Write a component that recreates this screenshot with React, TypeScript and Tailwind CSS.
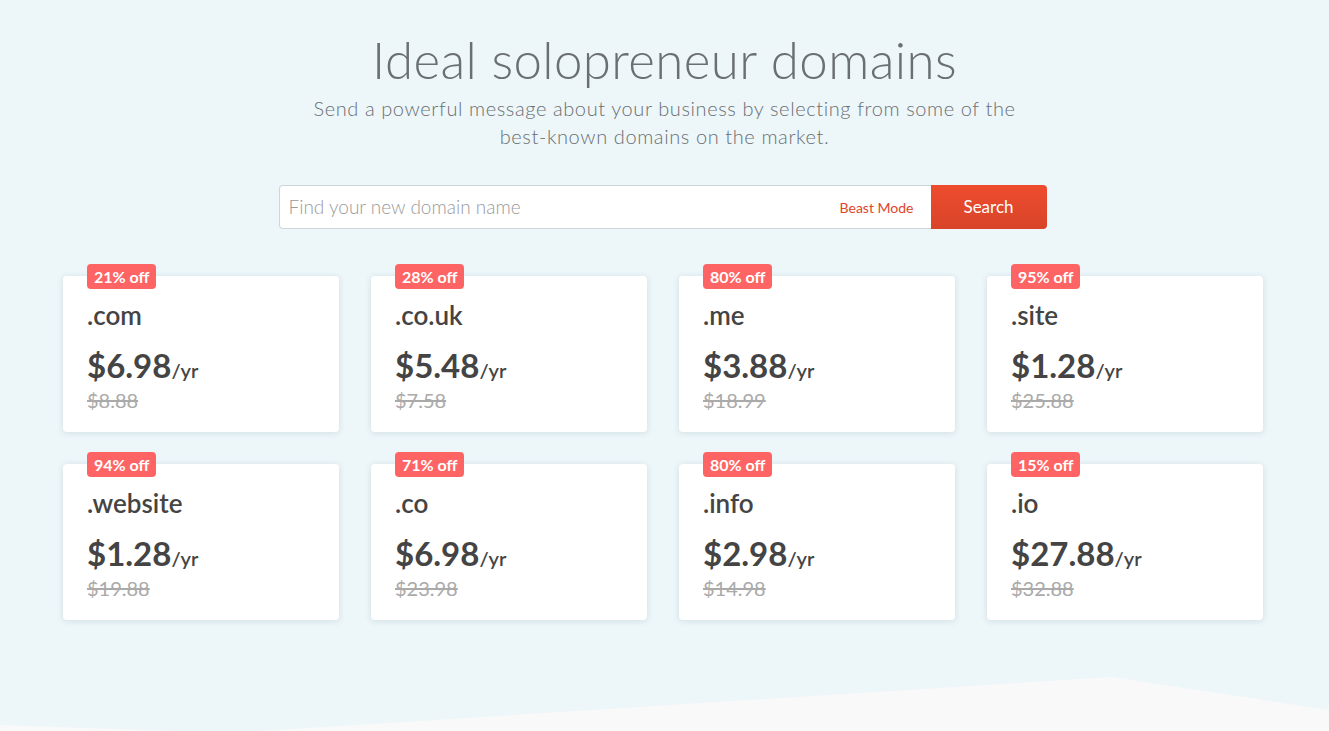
const domains = [
  { tld: ".com", price: "$6.98", old: "$8.88", off: "21% off" },
  { tld: ".co.uk", price: "$5.48", old: "$7.58", off: "28% off" },
  { tld: ".me", price: "$3.88", old: "$18.99", off: "80% off" },
  { tld: ".site", price: "$1.28", old: "$25.88", off: "95% off" },
  { tld: ".website", price: "$1.28", old: "$19.88", off: "94% off" },
  { tld: ".co", price: "$6.98", old: "$23.98", off: "71% off" },
  { tld: ".info", price: "$2.98", old: "$14.98", off: "80% off" },
  { tld: ".io", price: "$27.88", old: "$32.88", off: "15% off" },
];

const DomainCard = ({ tld, price, old, off }: (typeof domains)[number]) => (
  <div className="relative h-[156px] rounded-[4px] bg-white px-6 pt-[23px] shadow-[0_1px_6px_rgba(80,120,140,0.18)]">
    <span className="absolute left-6 top-[-12px] rounded-[4px] bg-[#fe6464] px-[7px] py-[2px] text-[16px] font-bold leading-[21px] text-white">
      {off}
    </span>
    <div className="text-[26px] font-semibold leading-[32px] text-[#444]">{tld}</div>
    <div className="mt-[14px] flex items-baseline text-[#444]">
      <span className="text-[33px] font-bold leading-[40px]">{price}</span>
      <span className="text-[20px] font-semibold">/yr</span>
    </div>
    <div className="mt-[3px] text-[20px] leading-[24px] text-[#aaa] line-through">{old}</div>
  </div>
);

export default function App() {
  return (
    <div className="relative h-[731px] overflow-hidden bg-[#edf6f9] font-['Lato',sans-serif]">
      <div className="flex flex-col items-center pt-[29px]">
        <h1 className="text-[51px] font-light leading-[62px] tracking-[0.4px] text-[#6a6f72]">
          Ideal solopreneur domains
        </h1>
        <p className="mt-[3px] w-[730px] text-center text-[20px] font-light leading-[28px] tracking-[0.6px] text-[#6a6f72]">
          Send a powerful message about your business by selecting from some of the best-known domains on the market.
        </p>
        <div className="ml-[-4px] mt-[35px] flex h-[44px] w-[768px]">
          <div className="flex flex-1 items-center rounded-l-[4px] border border-r-0 border-[#cfd6da] bg-white pl-[9px] pr-[17px]">
            <span className="flex-1 text-[19px] font-light text-[#9a9a9a]">Find your new domain name</span>
            <span className="text-[14px] text-[#e0452a]">Beast Mode</span>
          </div>
          <button className="w-[116px] rounded-r-[4px] bg-gradient-to-b from-[#ee4c2e] to-[#d84429] text-[17px] text-white">
            Search
          </button>
        </div>
      </div>
      <div className="ml-[63px] mt-[47px] grid w-[1200px] grid-cols-4 gap-x-8 gap-y-8">
        {domains.map((d) => (
          <DomainCard key={d.tld} {...d} />
        ))}
      </div>
      <svg className="absolute bottom-0 left-0" width="1329" height="60" viewBox="0 671 1329 60">
        <polygon points="0,725 230,733 1112,677 1329,710 1329,731 0,731" fill="#f9f9f9" />
      </svg>
    </div>
  );
}
